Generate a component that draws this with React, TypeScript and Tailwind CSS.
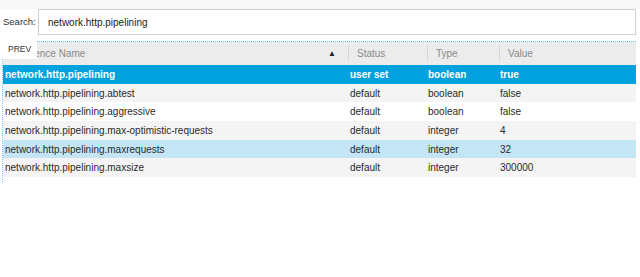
import { useState } from 'react';

interface Pref {
  name: string;
  status: string;
  type: string;
  value: string;
}

const prefs: Pref[] = [
  { name: 'network.http.pipelining', status: 'user set', type: 'boolean', value: 'true' },
  { name: 'network.http.pipelining.abtest', status: 'default', type: 'boolean', value: 'false' },
  { name: 'network.http.pipelining.aggressive', status: 'default', type: 'boolean', value: 'false' },
  { name: 'network.http.pipelining.max-optimistic-requests', status: 'default', type: 'integer', value: '4' },
  { name: 'network.http.pipelining.maxrequests', status: 'default', type: 'integer', value: '32' },
  { name: 'network.http.pipelining.maxsize', status: 'default', type: 'integer', value: '300000' },
];

export default function App() {
  const [query, setQuery] = useState('network.http.pipelining');
  const selected = 0;
  const hovered = 4;

  const rowClass = (i: number) => {
    if (i === selected) return 'bg-[#00a2dd] text-white font-bold';
    if (i === hovered) return 'bg-[#c4e6f4] text-[#2a2a2a]';
    return i % 2 === 1 ? 'bg-[#f4f4f4] text-[#2a2a2a]' : 'bg-white text-[#2a2a2a]';
  };

  return (
    <div className="w-[640px] h-[277px] bg-white text-[10px] font-['Liberation_Sans',Arial,sans-serif] overflow-hidden">
      {/* Search bar */}
      <div className="h-[9px] bg-[#f8f8f8]" />
      <div className="flex items-center h-[26px] pr-[4px]">
        <span className="w-[38px] pl-[3px] text-[9.5px] text-[#333]">Search:</span>
        <input
          value={query}
          onChange={(e) => setQuery(e.target.value)}
          className="flex-1 h-[26px] border border-[#d0d0d0] px-[9px] text-[10px] text-[#222] outline-none"
        />
      </div>

      {/* Table */}
      <div className="relative mt-[6px] w-[636px]">
        <div className="border-t border-dotted border-[#5cb9e8]" />
        <div className="ml-[2px] border-l border-dotted border-[#7cc4ea] pb-[5px]">
          <div className="flex h-[23px] items-center bg-[#ececec] text-[#8a8a8a]">
            <div className="w-[345px] flex items-center justify-between pl-[4px] pr-[12px]">
              <span>Preference Name</span>
              <span className="text-[#222] text-[8px] leading-none">▲</span>
            </div>
            <div className="w-[79px] h-[15px] flex items-center border-l border-[#d6d6d6] pl-[8px]">Status</div>
            <div className="w-[72px] h-[15px] flex items-center border-l border-[#d6d6d6] pl-[8px]">Type</div>
            <div className="flex-1 h-[15px] flex items-center border-l border-[#d6d6d6] pl-[8px]">Value</div>
          </div>
          {prefs.map((p, i) => (
            <div key={p.name} className={`flex h-[18.7px] items-center ${rowClass(i)}`}>
              <div className="w-[345px] pl-[2px] truncate">{p.name}</div>
              <div className="w-[79px] pl-[2px]">{p.status}</div>
              <div className="w-[72px] pl-[1px]">{p.type}</div>
              <div className="flex-1 pl-[1px]">{p.value}</div>
            </div>
          ))}
        </div>
        <div className="absolute left-0 top-[-1px] w-[37px] h-[19px] bg-white flex items-center pl-[8px] text-[8.5px] text-[#333]">
          PREV
        </div>
      </div>
    </div>
  );
}
